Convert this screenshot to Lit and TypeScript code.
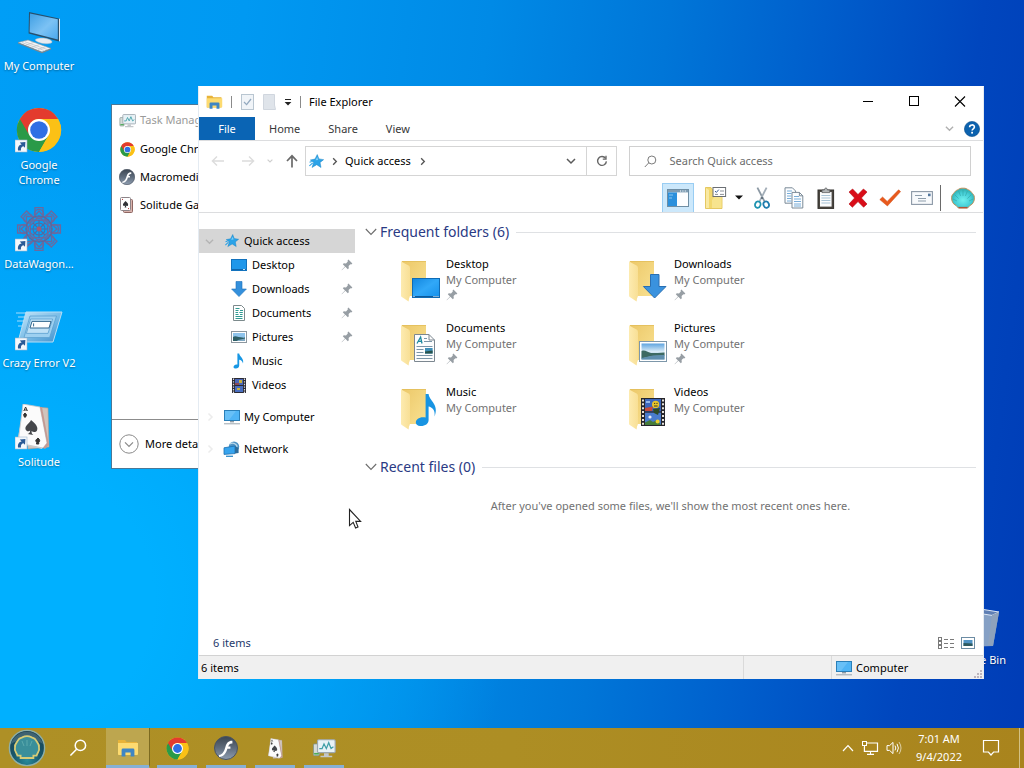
import { LitElement, html, css, svg, nothing, TemplateResult } from "lit";
import { customElement } from "lit/decorators.js";

/* ---------- artwork ---------- */

const art = (w: number, h: number, body: unknown, vb = `0 0 ${w} ${h}`) =>
  html`<svg class="art" width=${w} height=${h} viewBox=${vb} fill="none" aria-hidden="true">${body}</svg>`;

const shortcut = svg`
  <rect x="0" y="33" width="12" height="12" fill="#f4f8fc" stroke="#9fb6cc" stroke-width=".6"/>
  <path d="M3 43.4 C2.6 39.6 4.2 38 6.6 37.6 L4.8 35.6 L10.4 35 L10 40.8 L8.4 39.2 C6.4 39.8 5.6 41 6 43.4Z" fill="#2a5a96"/>`;

const chromeBody = svg`
  <circle cx="24" cy="24" r="22" fill="#fbc116"/>
  <path d="M24 24 L4.9 13 A22 22 0 0 0 24 46 L33.5 29.5Z" fill="#2a9a48"/>
  <path d="M4.9 13 A22 22 0 0 1 43.1 13 H24 A11 11 0 0 0 14.5 29.5Z" fill="#e33b2e"/>
  <path d="M43.1 13 A22 22 0 0 1 24 46 L33.5 29.5 A11 11 0 0 0 24 13Z" fill="#fbc116"/>
  <circle cx="24" cy="24" r="11" fill="#fff"/><circle cx="24" cy="24" r="8.8" fill="#2f6fe4"/>`;
const chrome = (s: number) => art(s, s, chromeBody, "1 1 46 46");

const flash = (s: number) => art(s, s, svg`
  <defs><linearGradient id="fl" x1="0" y1="0" x2="0" y2="1">
    <stop stop-color="#3c4652"/><stop offset=".5" stop-color="#5f6c7c"/><stop offset="1" stop-color="#8e9db0"/></linearGradient></defs>
  <circle cx="12" cy="12" r="11.5" fill="url(#fl)" stroke="#4a5462"/>
  <path d="M5 19 C9 18.4 10.4 14.6 11.4 11 C12.6 6.8 14.6 4.6 18.4 4.8 V7.4 C16 7.2 15 8.2 14.2 10.6 H16.4 V12.8 H13.4 C12 17.4 9.8 20.8 5 21Z" fill="#fff"/>`, "0 0 24 24");

const cards = svg`
  <path d="M9 3 L32 5 L33 44 L12 46Z" fill="#cfc4bd" stroke="#a89c94" stroke-width=".6"/>
  <path d="M8 1 L27 8 L26 46 L1 40Z" fill="#d9d2cf"/>
  <path d="M7 1 L24 4 L31 40 L27 45 L2 40Z" fill="#fbfbfb" stroke="#c2c4c8" stroke-width=".8"/>
  <path d="M27 45 L31 40 L24 4 L26 4 L33 42 L29 46Z" fill="#c59a92"/>
  <path d="M15 17 C19 20 22.6 24 21 27.4 C19.8 29.6 17 29.4 15.6 28 C15.4 30 16 31 17.4 32 L11.6 31 C13.4 30.6 14 29.4 14.2 27.6 C12.4 29 9.6 28 9.4 25.4 C9.4 22 13.6 20.6 15 17Z" fill="#44464a"/>
  <path d="M9.6 4 L7.8 8 M9.6 4 L11.4 8 M8.4 7 H11" stroke="#333" stroke-width="1"/>
  <path d="M9 10 C11 11.4 11 13 9.6 13 L10 14 H8 L8.4 13 C7 12.6 7.4 11.4 9 10Z M22 35 C24.4 37 24 39 22.6 39 L22.8 41 H20.4 L21 39 C19 38.6 19.4 37 22 35Z" fill="#333" stroke="#333"/>`;

const cardsMini = art(16, 16, svg`
  <rect x="4.5" y="2.5" width="9" height="13" rx="1" fill="#d9b3ad" stroke="#8e6662"/>
  <rect x="1.5" y=".5" width="10" height="13" rx="1" fill="#fff" stroke="#8d8488"/>
  <path d="M6.5 4 C8.4 5.8 9.6 7 9 8.4 C8.4 9.4 7.2 9 6.8 8.6 L7.4 10.4 H5.6 L6.2 8.6 C5.6 9.2 4.4 9.2 4 8.2 C3.6 7 5 5.8 6.5 4Z" fill="#2f3136"/>
  <path d="M3 2.4h1M9 11.6h1" stroke="#b3393c"/>`);

const taskIcon = (w: number, h: number) => art(w, h, svg`
  <rect x="1" y="5" width="5" height="10" rx="1" fill="#d5dbd8" stroke="#7b908a" stroke-width=".7"/>
  <rect x="4.5" y="1.5" width="15" height="11" rx="1" fill="#e8f2f6" stroke="#9da7af"/>
  <path d="M6 9 L8.4 9 L10 5 L12 9 L14 4 L16 9 L18 7.5" stroke="#3f9ea6" stroke-width="1"/>
  <path d="M10 13 H14 V15 H17 V16.4 H7 V15 H10Z" fill="#c3c7cb"/><path d="M1.6 13.4 h4" stroke="#4caa56" stroke-width="1.4"/>`, "0 0 20 17");

const computerDesk = art(48, 48, svg`
  <defs><linearGradient id="dk" x1="0" y1="0" x2="1" y2="1"><stop stop-color="#3f9fe4"/><stop offset=".55" stop-color="#7cc2f4"/><stop offset="1" stop-color="#4aa8ee"/></linearGradient></defs>
  <g transform="translate(0 1)">
  <path d="M14 3 L44 9.4 L44 32.4 L13.6 24.4Z" fill="#27506e"/>
  <path d="M15 4.4 L42.8 10.2 V30.6 L14.6 23.2Z" fill="url(#dk)"/>
  <path d="M44 9.4 L45 10 L45 32 L44 32.4Z" fill="#dfe7ee"/>
  <path d="M20 31 C24 27 38 30 37 33.4 C33 36 24 35 20 31Z" fill="#e6ebf0" stroke="#a8b2bc" stroke-width=".5"/>
  <path d="M3 33.6 L13 31 L36 39.4 L27 43Z" fill="#f4f5f6" stroke="#8f989f" stroke-width=".6"/>
  <path d="M7 33.6 L29 41.4 M10 32.8 L32 40.4 M11 36 L19 33.4 M17 38.2 L25 35.4 M23 40.4 L31 37.6" stroke="#b9bfc4" stroke-width=".7"/>
  <path d="M3 33.6 L27 43 L36 39.4 V40.4 L27 44.2 L3 34.6Z" fill="#7a868e"/></g>`);

const wagonPetals = [0, 45, 90, 135, 180, 225, 270, 315].map(
  (a) => svg`<g transform="rotate(${a} 24 23)">
    <path d="M20 9 V1.6 H28 V9 M17 13 L24 5 L31 13 M18 17 L24 10 L30 17"/>
    <circle cx="24" cy="8" r="4.6"/></g>`
);
const wagon = art(48, 48, svg`<g stroke="#7d6090" stroke-width="1.3" opacity=".85">${wagonPetals}</g>
  <g stroke="#55699f" stroke-width="1.1"><circle cx="24" cy="23" r="6"/><circle cx="24" cy="23" r="13"/><path d="M18 17 L30 29 M30 17 L18 29 M15 23 H33 M24 14 V32"/></g>
  <circle cx="24" cy="23" r="2.4" fill="#a85a70"/>${shortcut}`);

const crazy = art(48, 48, svg`
  <defs><linearGradient id="cz" x1="0" y1="0" x2="1" y2="1"><stop stop-color="#c9e7fa"/><stop offset=".5" stop-color="#7dbfe8"/><stop offset="1" stop-color="#3f8ecb"/></linearGradient></defs>
  <path d="M1 8 H11 M3 12 H10 M2 16 H9 M3 21 H8" stroke="#a6dcfb" stroke-width="1.2"/>
  <path d="M11 7 H47 L38 37 H3Z" fill="url(#cz)" stroke="#b6def6" stroke-width="1"/>
  <path d="M15 11 H41.5 L34.6 32.6 H9Z" fill="#9dd0f0" stroke="#5a9fcf" stroke-width=".8"/>
  <path d="M15.6 14 H37.6 L33 28.4 H11.4Z" fill="#bfe1f6" stroke="#5a9fcf" stroke-width=".8"/>
  <path d="M17 16.4 H36 L34 23 H15Z" fill="#fdfeff" stroke="#34688f"/>
  <path d="M18.6 18.4 v3" stroke="#34688f"/>${shortcut}`);

const recycle = art(48, 48, svg`
  <path d="M5 9 L46 10 L40 44 L12 45Z" fill="#93abc6" opacity=".9"/>
  <path d="M5 9 L15 5 L46 10 L39 13.4 L30 12Z" fill="#5f7fb4" stroke="#dfe9f6"/>
  <path d="M39 13 L46 10 L40 44 L35 43Z" fill="#8ea2bc"/>`);

const shell = art(24, 22, svg`
  <defs><radialGradient id="sh" cx=".5" cy=".6" r=".6"><stop stop-color="#6ff0ee"/><stop offset=".6" stop-color="#45ced6"/><stop offset="1" stop-color="#2fa8a6"/></radialGradient></defs>
  <path d="M7.4 21 H16.6 L19 18.4 C22 17.6 23.6 13.6 23.4 10.8 C23.6 8 21.4 6.6 20.6 5.4 C19.4 3.4 17.6 3 16.6 2.4 C14.6 1 13 1.2 12 1.2 C11 1.2 9.4 1 7.4 2.4 C6.4 3 4.6 3.4 3.4 5.4 C2.6 6.6 .4 8 .6 10.8 C.4 13.6 2 17.6 5 18.4Z" fill="url(#sh)" stroke="#c0925e" stroke-width="1"/>
  <path d="M12 9 V3 M9.6 9 L7.6 4 M7.6 11.6 L3.6 7.6 M6 14 L2 12 M14.4 9 L16.4 4 M16.4 11.6 L20.4 7.6 M18 14 L22 12" stroke="#2fa4a4" stroke-width=".6"/>
  <path d="M7.6 20.6 H16.4" stroke="#b0543a" stroke-width="1.4"/>`);

const startOrb = art(40, 40, svg`
  <defs><radialGradient id="orb" cx=".5" cy=".85" r=".8"><stop stop-color="#2a8a9a"/><stop offset=".5" stop-color="#17566a"/><stop offset="1" stop-color="#1b4354"/></radialGradient></defs>
  <circle cx="20" cy="20" r="17.6" fill="url(#orb)" stroke="#8fb0a8" stroke-width="1.4"/>
  <path d="M4 16 A16.6 16.6 0 0 1 36 16 C28 10 12 10 4 16Z" fill="#fff" opacity=".16"/>
  <path d="M13.6 30 V27.6 H10.4 C9.4 24 7 23 8 19.4 C7.4 16 10 14.4 11 12.4 C12.6 9.6 14.4 10.4 16 9 C18 7.8 22 7.8 24 9 C25.6 10.4 27.4 9.6 29 12.4 C30 14.4 32.6 16 32 19.4 C33 23 30.6 24 29.6 27.6 H26.4 V30Z" fill="#3a8f9a" stroke="#d8cc76" stroke-width="1.8"/>
  <path d="M20 18 V12 M17 18 L15 13 M23 18 L25 13" stroke="#6ab4b4" stroke-width=".7"/>`);

const star = (s: number) => art(s, s, svg`
  <path d="M8.8 .6 L10.6 5.2 L15.6 6 L11.8 9 L12.8 14.4 L8.2 11.4 L3.2 14.4 L5 9 L1.4 6.4 L6.4 5.4Z" fill="#2ba3e8" stroke="#1480c4" stroke-width=".5"/>
  <path d="M.4 12.6 L4 9.4 M.6 8.8 L3 8" stroke="#2ba3e8" stroke-width="1.2"/><path d="M8.8 3 L9.8 6.4 L7 6.6Z" fill="#7fd0f8"/>`, "0 0 16 16");

const explorerIcon = (w: number, h: number) => art(w, h, svg`
  <path d="M1 1 H8 L9.6 3 H20 V16 H1Z" fill="#e8b339"/>
  <path d="M1 4 H21 V15 Q21 16 20 16 H2 Q1 16 1 15Z" fill="#fddb70"/>
  <path d="M4.6 17.6 V11 Q4.6 9.6 6 9.6 H16 Q17.4 9.6 17.4 11 V17.6 H13.6 V13.4 H8.4 V17.6Z" fill="#3f86c4"/>`, "0 0 22 18");

/* 16px glyphs used in the tree */
const tree: Record<string, TemplateResult> = {
  Desktop: art(16, 16, svg`<rect x=".5" y="2.5" width="15" height="11" fill="#1f97ea" stroke="#1272bd"/><path d="M1 12.5 h14" stroke="#0f66ad"/><path d="M12 12.5h2" stroke="#bfe2fb"/>`),
  Downloads: art(16, 16, svg`<path d="M5 .5 H11 V8 H15.4 L8 15.6 L.6 8 H5Z" fill="#3490dc" stroke="#1d71ba" stroke-width=".6"/>`),
  Documents: art(16, 16, svg`<path d="M2.5 .5 H10.5 L13.5 3.5 V15.5 H2.5Z" fill="#fff" stroke="#7c8a8c"/><path d="M4.5 3.5h4M4.5 5.5h3M9 5.5h3M4.5 7.5h2.6M8.4 7.5h3.4M4.5 9.5h3M9 9.5h2.6M4.5 11.5h7M4.5 13.5h7" stroke="#2f9a92"/>`),
  Pictures: art(16, 16, svg`<rect x=".5" y="2.5" width="15" height="11" fill="#fff" stroke="#8c979f"/><rect x="2" y="4" width="12" height="8" fill="#8fc4ec"/><path d="M2 8 C5 6 7 9 14 8.6 V12 H2Z" fill="#2e5f66"/><path d="M7 11 L14 9.6 V12 H6Z" fill="#7fa9c4"/>`),
  Music: art(16, 16, svg`<path d="M6.4 .4 H8.2 C8.6 4 13.4 5 12 10.4 C11.4 7.8 9.8 7 8.2 6.8 V12.6 C8.2 14.6 6.4 15.8 4.4 15.6 C2.4 15.4 2 13.6 3.2 12.4 C4 11.6 5.4 11.2 6.4 11.6Z" fill="#1797e4"/>`),
  Videos: art(16, 16, svg`<rect x="1" y="1" width="14" height="15" fill="#2b2b33"/><path d="M2.5 1.6 V16 M13.5 1.6 V16" stroke="#dedee4" stroke-width="1.2" stroke-dasharray="1.4 1.2"/><rect x="4" y="2" width="8" height="6" fill="#4a67b8"/><rect x="4" y="9" width="8" height="6" fill="#4a6fc0"/><path d="M8 3h3v3H8zM6 11h3v2H6z" fill="#c8b13a"/><path d="M4 6h4v2H4z" fill="#8a4a58"/>`),
};

const pcIcon = art(18, 16, svg`
  <rect x="1.5" y="1.5" width="15" height="10" fill="#4fb4f5" stroke="#2a7fb8"/><path d="M2 2 H13 L6 11 H2Z" fill="#8fd2fa" opacity=".4"/>
  <path d="M7 12 H11 V13.4 H7Z" fill="#8f9ba4"/><path d="M1 14.8 H17" stroke="#9aa6ae" stroke-width="1"/>`);

const netIcon = art(18, 16, svg`
  <circle cx="11" cy="5.6" r="5.2" fill="#4e92c4"/><path d="M7 3 C10 1 13 3 14 5 C14 8 11 6 10 9" stroke="#bcd9ea" stroke-width="1.3"/>
  <path d="M1 6.8 L12 5 V12.6 L1 13.4Z" fill="#37a4ee" stroke="#1c6fae" stroke-width=".8"/><path d="M12 5 L15.6 7 V12 L12 12.6Z" fill="#2c6c9c"/><path d="M3 15.3 H10" stroke="#3c92cc" stroke-width="1.4"/>`);

const pin = art(12, 12, svg`<path d="M7.4 .6 L11.4 4.6 L10.2 5.4 L9.4 5.2 L7.6 7 L7.8 9.2 L6.8 10.2 L4.4 7.8 L.8 11.2 L.6 11 L4 7.4 L1.8 5.2 L2.8 4.2 L5 4.4 L6.8 2.6 L6.6 1.6Z" fill="#979ea4"/>`);

/* 48px folders with an overlay */
const overlays: Record<string, unknown> = {
  Desktop: svg`<defs><linearGradient id="od" x1="0" y1="0" x2="1" y2="1"><stop stop-color="#1286de"/><stop offset=".5" stop-color="#31a8f8"/><stop offset="1" stop-color="#1590ea"/></linearGradient></defs>
    <rect x="14.5" y="22.5" width="27" height="19" fill="url(#od)" stroke="#0f6bb4"/><path d="M15 40.5h26" stroke="#0c5a9c"/><path d="M15.5 40.5h1M35.5 40.5h1M37.5 40.5h1M39.5 40.5h1" stroke="#fff"/>`,
  Downloads: svg`<path d="M24.5 18.5 H33 V30.5 H40 L28.6 42 L17.4 30.5 H24.5Z" fill="#3a92de" stroke="#2a6fb2"/>`,
  Documents: svg`<path d="M16.5 14.5 H31 L36.5 20 V41.5 H16.5Z" fill="#fdfdfd" stroke="#7c8790"/><path d="M31 14.5 V20 H36.5" stroke="#7c8790"/>
    <path d="M19 23.5 L22.6 17 L24 23.5 M20.4 21.4 H24" stroke="#1f8aa0" stroke-width="1.3"/><path d="M26 18.5h3M26 21.5h8M18.5 26.5h16M18.5 29.5h7M18.5 32.5h7M18.5 35.5h16M18.5 38.5h16" stroke="#7a95a8"/>
    <rect x="27" y="28" width="7.6" height="5.6" fill="#3f8fb8"/><path d="M27 31.6 L34.6 30.6 V33.6 H27Z" fill="#27544e"/>`,
  Pictures: svg`<defs><linearGradient id="op" x1="0" y1="0" x2="0" y2="1"><stop stop-color="#5ea4e0"/><stop offset=".5" stop-color="#d8ebf6"/><stop offset="1" stop-color="#8db8d6"/></linearGradient></defs>
    <rect x="13.5" y="21.5" width="27" height="20" fill="#fff" stroke="#7d97aa"/><rect x="15.5" y="23.5" width="23" height="16" fill="url(#op)"/>
    <path d="M15.5 31 C19 29.4 21 32 25 33 C30 33 34 33 38.5 32.4 V35.4 L26 36 L15.5 38.6Z" fill="#3d6a62"/><path d="M15.5 39.5 V38 L27 35.4 L38.5 35 V39.5Z" fill="#5f8fae"/>`,
  Music: svg`<path d="M27.6 10 H30.6 C31.2 17 41.4 20 36.6 32.6 C37.4 25.6 34 23.4 30.6 22.6 V36 C30.6 40 26.6 42.4 22 42 C17.4 41.4 16.6 37.6 19.6 35 C22 33 25 32.8 27.6 33.6Z" fill="#1894e2"/>`,
  Videos: svg`<rect x="15" y="14" width="24" height="28" fill="#25252b"/><path d="M17 15.4 V42 M37 15.4 V42" stroke="#e6e3dc" stroke-width="2" stroke-dasharray="2 1.9"/>
    <rect x="19" y="15" width="16" height="12.4" fill="#3c66bc"/><rect x="19" y="28.6" width="16" height="12.4" fill="#4a7ccd"/>
    <circle cx="29.6" cy="20.4" r="3.6" fill="#e8c52a"/><path d="M28 19.4h1.2M30.4 19.4h1.2M28 22h3.6" stroke="#3a3420"/><path d="M19 24 L27 22.6 L26 27 H19Z" fill="#c44a3a"/><path d="M20 17h4v2h-4z" fill="#93b6ea"/>
    <path d="M27 25 L34 24 L32 31 L28 29Z" fill="#2e4a26"/><path d="M19 38.6 L24 36 L27 38 L31 36 L35 41 H19Z" fill="#467c3a"/><circle cx="31.6" cy="37.4" r="2" fill="#ecd030"/><circle cx="24" cy="33" r="1.6" fill="#e9edf6"/>`,
};
const folder = (name: string) => art(48, 48, svg`
  <defs><linearGradient id="ff" x1="0" y1="0" x2="1" y2="0"><stop stop-color="#fdebb0"/><stop offset="1" stop-color="#f8df95"/></linearGradient>
  <linearGradient id="fb" x1="0" y1="0" x2="1" y2="1"><stop stop-color="#ecc869"/><stop offset="1" stop-color="#f9e191"/></linearGradient></defs>
  <path d="M4 5 H28 V38 Q28 40 26 40 H6Z" fill="url(#fb)"/>
  <path d="M3 5.4 L10.6 9.6 Q12 10.4 12 12 V39 Q12 41 11 42.4 L10.6 45.4 L3.8 41 Q3 40.4 3 39.4Z" fill="url(#ff)"/>
  <path d="M3.4 5 H28 V5.8 H4.4Z" fill="#e2bd58"/>
  ${overlays[name]}`);

const chev = (dir: "d" | "r", color: string, s = 10) => art(s, s,
  svg`<path d=${dir === "d" ? "M1 3 L5 7 L9 3" : "M3.5 1.5 L7 5 L3.5 8.5"} stroke=${color} stroke-width="1.5"/>`, "0 0 10 10");
const bigChev = art(12, 8, svg`<path d="M.8 1 L6 6.4 L11.2 1" stroke="#6d6d6d" stroke-width="1.1"/>`);

/* ---------- toolbar glyphs ---------- */
const tbPane = art(22, 18, svg`<rect x=".5" y=".5" width="21" height="17" fill="#fdfeff" stroke="#6f8ea4"/><rect x="1" y="1" width="20" height="2.4" fill="#7e9db4"/><rect x="1" y="3.4" width="9" height="13.6" fill="#2b90dc"/><path d="M2 6h4M2 9h3" stroke="#8cc8f2"/><path d="M13 2h1M15.4 2h1M17.8 2h1" stroke="#fff"/>`);
const tbProps = art(22, 24, svg`<path d="M.5 1.5 H6 L7.5 3.5 H17 V22.5 H.5Z" fill="#f2d86e" stroke="#e0bf4c" stroke-width=".8"/><path d="M1 2 L4 4 V22 H1Z" fill="#f9e9a2"/><path d="M10 10 H16.6 V22 H7 V14Z" fill="#f7e48e"/><rect x="8" y="1.5" width="12.6" height="9" fill="#fff" stroke="#6b6f74"/><path d="M10 5 l1.4 1.4 L13.8 3.6" stroke="#3b5f9a" stroke-width="1"/><path d="M15 5h4M10 8.4h3M15 8.4h4" stroke="#8d9298"/>`);
const tbCut = art(16, 22, svg`<path d="M3.4 .6 L10.6 14.6" stroke="#8b98a3" stroke-width="1.8"/><path d="M12.6 .6 L5.4 14.6" stroke="#a3aeb8" stroke-width="1.8"/><ellipse cx="3.8" cy="17.6" rx="2.7" ry="3.2" stroke="#1e93b0" stroke-width="1.8" transform="rotate(20 3.8 17.6)"/><ellipse cx="12.2" cy="17.6" rx="2.7" ry="3.2" stroke="#1e7cae" stroke-width="1.8" transform="rotate(-20 12.2 17.6)"/><circle cx="8" cy="11" r="1" fill="#52606c"/>`);
const tbCopy = art(20, 22, svg`<g stroke="#7b8a97" fill="#fbfdff"><path d="M1 .8 H8.4 L11.6 4 V16.2 H1Z"/><path d="M8 5.4 H15.4 L18.8 8.8 V21 H8Z"/></g><path d="M3 4h5M3 6.5h4.4M3 9h4.4M3 11.5h4.4M3 14h4.4M10 9.5h5M10 12h7M10 14.5h7M10 17h7M10 19h7" stroke="#6aa4d4" stroke-width=".9"/><path d="M15.4 5.4V8.8h3.4" stroke="#7b8a97"/>`);
const tbPaste = art(18, 22, svg`<rect x="1" y="3" width="15.6" height="18.4" fill="#4a4640" stroke="#33302c"/><rect x="3" y="5" width="11.6" height="14.6" fill="#fbfcfd"/><path d="M4.4 8.5h9M4.4 11h9M4.4 13.5h9M4.4 16h9" stroke="#a9c3d6"/><path d="M5 5.6 V3 H7.4 C7.4 .4 10.4 .4 10.4 3 H12.8 V5.6Z" fill="#b3b6b8" stroke="#5c5e60" stroke-width=".8"/>`);
const tbDel = art(20, 20, svg`<path d="M1 4 L4.6 1 L10 6.6 L15.4 1 L19 4 L13.4 10 L19 16 L15.6 19.2 L10 13.6 L4.4 19.2 L1 16 L6.6 10Z" fill="#d90d18" stroke="#b30a12" stroke-width=".6"/>`);
const tbCheck = art(22, 18, svg`<path d="M.8 10.6 L3.6 8 L8.2 12.4 L19.6 .8 L21.6 2.6 L8.4 17Z" fill="#e8591c" stroke="#cf4c14" stroke-width=".5"/>`);
const tbMail = art(22, 14, svg`<rect x=".6" y=".6" width="20.8" height="12.8" fill="#f8fafc" stroke="#8b98a6" stroke-width="1.1"/><path d="M4 4.5h7M7 7.5h8M7 10h8" stroke="#8e9dab"/><rect x="17" y="2.6" width="2.6" height="2.6" fill="#55789e"/>`);

interface Item { name: string; pinned: boolean }
const folders: Item[] = [
  { name: "Desktop", pinned: true },
  { name: "Downloads", pinned: true },
  { name: "Documents", pinned: true },
  { name: "Pictures", pinned: true },
  { name: "Music", pinned: false },
  { name: "Videos", pinned: false },
];

const base = css`
  :host { display: block; font-family: "Noto Sans", "Open Sans", sans-serif; font-size: 11px; line-height: 16px; color: #000; }
  * { box-sizing: border-box; }
  button, input { font: inherit; color: inherit; border: 0; background: none; padding: 0; margin: 0; }
  a { color: inherit; text-decoration: none; }
  button, a { display: flex; align-items: center; white-space: nowrap; }
  h2, p, ul { margin: 0; padding: 0; font-weight: 400; list-style: none; }
  .art { display: block; flex: none; }
`;

@customElement("task-window")
class TaskWindow extends LitElement {
  static styles = [base, css`
    :host { background: #fff; border: 1px solid #4b7897; display: flex; flex-direction: column; }
    .head, .row { display: flex; align-items: center; gap: 5px; height: 28px; padding-left: 7px; white-space: nowrap; }
    .head { color: #9a9a9a; height: 30px; }
    .ic { width: 16px; display: flex; justify-content: center; }
    ul { flex: 1; }
    .foot { border-top: 1px solid #8c8c8c; height: 49px; display: flex; align-items: center; padding-left: 7px; }
    .foot button { gap: 6px; }
  `];
  render() {
    const row = (icon: unknown, text: string) => html`<li class="row"><span class="ic">${icon}</span>${text}</li>`;
    return html`
      <div class="head"><span class="ic">${taskIcon(17, 15)}</span>Task Manager</div>
      <ul>
        ${row(chrome(15), "Google Chrome")}
        ${row(flash(16), "Macromedia Flash")}
        ${row(cardsMini, "Solitude Game")}
      </ul>
      <div class="foot"><button>${art(20, 20, svg`<circle cx="10" cy="10" r="9.2" stroke="#8a8a8a"/><path d="M6 8.4 L10 12.4 L14 8.4" stroke="#8a8a8a" stroke-width="1.2"/>`)}More details</button></div>`;
  }
}

@customElement("explorer-window")
class ExplorerWindow extends LitElement {
  static styles = [base, css`
    :host { background: #fff; border: 1px solid #e4ebf2; border-top-color: #fff; border-bottom: 0; display: flex; flex-direction: column; }
    .title { display: flex; align-items: stretch; height: 30px; padding-left: 7px; }
    .quick { display: flex; align-items: center; flex: 1; gap: 8px; }
    .quick .sep { width: 1px; height: 12px; background: #8a8a8a; }
    .caption { width: 46px; justify-content: center; }
    .tabs { display: flex; height: 24px; border-bottom: 1px solid #dcdddf; align-items: stretch; color: #383838; }
    .tab { padding: 0 14px; }
    .tab.file { background: #0a64b4; color: #fff; width: 56px; padding: 0; justify-content: center; }
    .right { margin-left: auto; display: flex; align-items: center; gap: 10px; padding-right: 3px; }
    .nav { display: flex; align-items: center; height: 40px; padding: 0 12px; }
    .arrows { display: flex; align-items: center; gap: 12px; width: 94px; }
    .address { flex: 310; height: 30px; border: 1px solid #d5d5d5; display: flex; align-items: stretch; margin-right: 12px; min-width: 0; }
    .crumbs { display: flex; align-items: center; gap: 6px; flex: 1; padding-left: 3px; }
    .crumbs .name { padding: 0 1px 0 0; }
    .drop { width: 30px; justify-content: center; }
    .refresh { width: 30px; justify-content: center; border-left: 1px solid #d5d5d5; }
    .search { flex: 325; height: 30px; border: 1px solid #d0d0d0; display: flex; align-items: center; gap: 12px; padding-left: 14px; }
    .search input { flex: 1; min-width: 0; outline: 0; }
    .search input::placeholder { color: #6c6c6c; opacity: 1; }
    .tools { height: 32px; display: flex; justify-content: flex-end; align-items: stretch; padding: 2px 7px 0 0; border-bottom: 1px solid #dcdddf; }
    .tools button { width: 32px; justify-content: center; }
    .tools .on { background: #cce8fb; border: 1px solid #99cdf3; border-bottom: 0; }
    .tools .props { margin-left: 6px; }
    .tools .more { width: 14px; }
    .tools .bar { width: 1px; background: #6a6a6a; margin: 2px 9px 1px 2px; }
    .tools .shell { width: 26px; }
    .body { flex: 1; display: flex; min-height: 0; }
    .side { width: 156px; padding-top: 16px; flex: none; }
    .side a { height: 24px; padding-right: 2px; }
    .side .root { padding-left: 6px; gap: 3px; }
    .side .root .exp { width: 15px; display: flex; }
    .side .root .pic { width: 18px; display: flex; justify-content: center; }
    .side .root.sel { background: #d6d6d6; }
    .side .kid { padding-left: 32px; gap: 5px; }
    .side .kid .lbl { flex: 1; }
    .side .gap { margin-top: 8px; }
    .main { flex: 1; padding: 11px 7px 0 10px; display: flex; flex-direction: column; min-width: 0; }
    .group { display: flex; align-items: center; height: 16px; color: #2a3a84; white-space: nowrap; gap: 3px; }
    .group::after { content: ""; flex: 1; height: 1px; background: #dfe1e4; margin-left: 4px; }
    .group h2 { font-size: 14px; }
    .tiles { display: grid; grid-template-columns: repeat(auto-fill, 228px); grid-auto-rows: 64px; padding: 16px 0 0 33px; max-width: 560px; height: 219px; }
    .tile { align-items: flex-start; text-align: left; }
    .info { display: flex; flex-direction: column; align-items: flex-start; }
    .info .art { margin-top: 1px; }
    .sub, .empty { color: #727272; }
    .empty { text-align: center; padding-top: 23px; }
    .count { display: flex; align-items: center; justify-content: space-between; height: 24px; padding: 0 8px 0 14px; color: #25396b; }
    .views { display: flex; gap: 6px; }
    .status { display: grid; grid-template-columns: 1fr 88px 151px; height: 24px; background: #f0f0f0; border-top: 1px solid #d2d2d2; }
    .cell { display: flex; align-items: center; gap: 3px; padding-left: 2px; border-right: 1px solid #dadada; }
    .cell.last { border: 0; padding-left: 3px; }
    .grip { margin: auto 1px 1px auto; }
  `];

  private group(text: string) {
    return html`<div class="group">${bigChev}<h2>${text}</h2></div>`;
  }

  render() {
    return html`
      <div class="title">
        <div class="quick">
          ${explorerIcon(17, 14)}<span class="sep"></span>
          <button aria-label="Properties">${art(14, 16, svg`<rect x="1.5" y=".5" width="12" height="15" fill="#f0f4f8" stroke="#b9c6d1"/><path d="M4 8 L6.6 10.6 L11 5" stroke="#93a9bf" stroke-width="1.3"/>`)}</button>
          <button aria-label="New folder">${art(14, 16, svg`<path d="M1.5 .5 H12.5 V11 L13.5 15.5 H1.5Z" fill="#dfe4ea" stroke="#d0d6de"/>`)}</button>
          <button aria-label="Customize">${art(8, 8, svg`<path d="M1 1.5h6" stroke="#222"/><path d="M.6 4H7.4L4 7.6Z" fill="#222"/>`)}</button>
          <span class="sep"></span>
          <span>File Explorer</span>
        </div>
        <button class="caption" aria-label="Minimize">${art(12, 12, svg`<path d="M1 5.5h10" stroke="#000"/>`)}</button>
        <button class="caption" aria-label="Maximize">${art(12, 12, svg`<rect x="1.5" y=".5" width="9" height="9" stroke="#000"/>`)}</button>
        <button class="caption" aria-label="Close">${art(12, 12, svg`<path d="M1 .5l10 10M11 .5L1 10.5" stroke="#000" stroke-width="1.1"/>`)}</button>
      </div>
      <div class="tabs">
        <button class="tab file">File</button><button class="tab">Home</button><button class="tab">Share</button><button class="tab">View</button>
        <div class="right">
          <button aria-label="Expand the ribbon">${chev("d", "#b0b0b0", 9)}</button>
          <button aria-label="Help">${art(16, 16, svg`<circle cx="8" cy="8" r="7.6" fill="#0c62ae" stroke="#0a4d8c" stroke-width=".6"/><path d="M5.6 6.2 C5.6 3.2 10.4 3.2 10.4 6 C10.4 7.8 8.1 7.8 8.1 9.6" stroke="#fff" stroke-width="1.6"/><rect x="7.2" y="10.8" width="1.8" height="1.8" fill="#fff"/>`)}</button>
        </div>
      </div>
      <div class="nav">
        <div class="arrows">
          <button aria-label="Back">${art(14, 12, svg`<path d="M13 6H1.6M6 1.4L1.4 6L6 10.6" stroke="#dcdcdc" stroke-width="1.4"/>`)}</button>
          <button aria-label="Forward">${art(18, 12, svg`<path d="M5 6H16.4M12 1.4L16.6 6L12 10.6" stroke="#dcdcdc" stroke-width="1.4"/>`)}</button>
          <button aria-label="Recent locations">${art(6, 6, svg`<path d="M.6 1.6L3 4L5.4 1.6" stroke="#cfcfcf" stroke-width="1.2"/>`)}</button>
          <button aria-label="Up">${art(14, 14, svg`<path d="M7 13.4V2M2 7L7 1.8L12 7" stroke="#6a6a6a" stroke-width="1.7"/>`)}</button>
        </div>
        <div class="address">
          <div class="crumbs">${star(15)}${chev("r", "#555", 9)}<a class="name" href="#">Quick access</a>${chev("r", "#555", 9)}</div>
          <button class="drop" aria-label="Previous locations">${chev("d", "#5a5a5a", 10)}</button>
          <button class="refresh" aria-label="Refresh">${art(12, 12, svg`<path d="M9.6 3.4 A4.4 4.4 0 1 0 10.4 6.4" stroke="#666" stroke-width="1.4"/><path d="M10 .8V4.2H6.8" stroke="#666" stroke-width="1.3"/>`)}</button>
        </div>
        <label class="search">${art(13, 13, svg`<circle cx="7.8" cy="5" r="4" stroke="#7a7a7a"/><path d="M4.8 7.8L.8 12" stroke="#7a7a7a"/>`)}
          <input type="text" aria-label="Search Quick access" placeholder="Search Quick access" /></label>
      </div>
      <div class="tools">
        <button class="on" aria-label="Navigation pane">${tbPane}</button>
        <button class="props" aria-label="Layout">${tbProps}</button>
        <button class="more" aria-label="More layouts">${art(8, 5, svg`<path d="M0 .5H8L4 4.5Z" fill="#111"/>`)}</button>
        <button aria-label="Cut">${tbCut}</button>
        <button aria-label="Copy">${tbCopy}</button>
        <button aria-label="Paste">${tbPaste}</button>
        <button aria-label="Delete">${tbDel}</button>
        <button aria-label="Rename">${tbCheck}</button>
        <button aria-label="E-mail">${tbMail}</button>
        <span class="bar"></span>
        <button class="shell" aria-label="Classic settings">${shell}</button>
      </div>
      <div class="body">
        <nav class="side">
          <a class="root sel" href="#"><span class="exp">${chev("d", "#b4b4b4", 9)}</span><span class="pic">${star(14)}</span><span>Quick access</span></a>
          ${folders.map((f) => html`<a class="kid" href="#">${tree[f.name]}<span class="lbl">${f.name}</span>${f.pinned ? pin : nothing}</a>`)}
          <a class="root gap" href="#"><span class="exp">${chev("r", "#ececec", 10)}</span><span class="pic">${pcIcon}</span><span>My Computer</span></a>
          <a class="root gap" href="#"><span class="exp">${chev("r", "#ececec", 10)}</span><span class="pic">${netIcon}</span><span>Network</span></a>
        </nav>
        <section class="main">
          ${this.group("Frequent folders (6)")}
          <div class="tiles">
            ${folders.map((f) => html`<button class="tile">${folder(f.name)}
              <span class="info"><span>${f.name}</span><span class="sub">My Computer</span>${f.pinned ? pin : nothing}</span></button>`)}
          </div>
          ${this.group("Recent files (0)")}
          <p class="empty">After you've opened some files, we'll show the most recent ones here.</p>
        </section>
      </div>
      <div class="count"><span>6 items</span>
        <div class="views">
          <button aria-label="Details view">${art(17, 13, svg`<g stroke="#7a7a7a"><rect x=".5" y=".5" width="3" height="3"/><rect x=".5" y="4.5" width="3" height="3"/><rect x=".5" y="8.5" width="3" height="3"/><path d="M6 2.5h4M12 2.5h4M6 6.5h4M12 6.5h4M6 10.5h4M12 10.5h4"/></g>`)}</button>
          <button aria-label="Large icons view">${art(14, 12, svg`<rect x=".5" y=".5" width="13" height="11" fill="#fff" stroke="#6c8ca4"/><rect x="2.5" y="3" width="9" height="6" fill="#4f92c4"/><path d="M2.5 6l9 .6V9h-9z" fill="#2e5a60"/>`)}</button>
        </div>
      </div>
      <div class="status">
        <span class="cell">6 items</span><span class="cell"></span>
        <span class="cell last">${pcIcon}<span>Computer</span><span class="grip">${art(8, 8, svg`<path d="M6 0h2v2H6zM3 3h2v2H3zM6 3h2v2H6zM0 6h2v2H0zM3 6h2v2H3zM6 6h2v2H6z" fill="#bdb5bd"/>`)}</span></span>
      </div>`;
  }
}

@customElement("app-root")
class AppRoot extends LitElement {
  static styles = [base, css`
    :host {
      display: flex; flex-direction: column; height: 100vh; overflow: hidden;
      background:
        radial-gradient(ellipse 50% 60% at 0% 78%, #00b0ff 30%, #00b0ff00 100%),
        linear-gradient(97deg, #009ef6 0%, #0099f2 22%, #008ae6 44%, #0076d8 60%, #005ecc 74%, #0046be 88%, #003cb6 100%);
    }
    .desk { flex: 1; position: relative; min-height: 0; }
    .icons { width: 78px; display: flex; flex-direction: column; }
    .icon { height: 99px; width: 78px; padding-top: 8px; flex-direction: column; align-items: center; color: #fff; line-height: 15px; gap: 2px; text-align: center; text-shadow: 0 1px 2px #0006; }
    .icon span { max-width: 76px; white-space: normal; }
    .bin { position: absolute; right: 8px; bottom: 35px; }
    .task { position: absolute; left: 111px; top: 104px; width: 360px; height: 365px; }
    .explorer { position: absolute; left: 198px; right: 40px; top: 86px; bottom: 49px; }
    .cursor { position: absolute; left: 348px; top: 508px; }
    .bar { height: 40px; display: flex; align-items: stretch; background: linear-gradient(90deg, #ae9026, #ad8e24 50%, #a9841d); color: #fff; }
    .start { width: 54px; justify-content: center; }
    .find { width: 52px; justify-content: center; padding-right: 5px; }
    .apps { display: flex; gap: 5px; flex: 1; }
    .app { width: 44px; justify-content: center; border-bottom: 3px solid transparent; position: relative; padding-top: 3px; }
    .app::after { content: ""; position: absolute; left: 2px; right: 2px; bottom: -3px; height: 3px; background: #86b0d6; }
    .app.on { background: #bda64f; border-right: 1px solid #7c6a20; }
    .app.on::after { left: 0; right: 0; }
    .tray { display: flex; align-items: center; gap: 7px; }
    .clock { width: 60px; text-align: center; line-height: 18px; flex-direction: column; justify-content: center; }
    .notes { width: 30px; justify-content: center; }
    .peek { width: 5px; height: 40px; border-left: 1px solid #d3c184; margin-left: 6px; }
  `];
  render() {
    const icon = (art: unknown, text: string, extra = "") => html`<button class="icon ${extra}">${art}<span>${text}</span></button>`;
    return html`
      <div class="desk">
        <div class="icons">
          ${icon(computerDesk, "My Computer")}
          ${icon(art(48, 48, svg`<g transform="translate(0 -1)">${chromeBody}</g>${shortcut}`), "Google Chrome")}
          ${icon(wagon, "DataWagon...")}
          ${icon(crazy, "Crazy Error V2")}
          ${icon(art(48, 48, svg`<g transform="translate(1 -1)">${cards}</g>${shortcut}`), "Solitude")}
        </div>
        ${icon(recycle, "Recycle Bin", "bin")}
        <task-window class="task"></task-window>
        <explorer-window class="explorer"></explorer-window>
        <div class="cursor">${art(16, 22, svg`<path d="M1.5 1.5V17.6L5.2 14.4L7.6 20L10 19L7.8 13.4H12.6Z" fill="#fff" stroke="#222" stroke-width="1.1"/>`)}</div>
      </div>
      <div class="bar">
        <button class="start" aria-label="Start">${startOrb}</button>
        <button class="find" aria-label="Search">${art(18, 18, svg`<circle cx="11.4" cy="6.4" r="5.2" stroke="#fff" stroke-width="1.5"/><path d="M7.6 10.2L1.4 16.6" stroke="#fff" stroke-width="1.5"/>`)}</button>
        <div class="apps">
          <button class="app on" aria-label="File Explorer">${explorerIcon(22, 18)}</button>
          <button class="app" aria-label="Google Chrome">${chrome(23)}</button>
          <button class="app" aria-label="Flash">${flash(24)}</button>
          <button class="app" aria-label="Solitude">${art(17, 21, cards, "-1 0 37 47")}</button>
          <button class="app" aria-label="Task Manager">${taskIcon(24, 20)}</button>
        </div>
        <div class="tray">
          <button aria-label="Show hidden icons">${art(12, 8, svg`<path d="M1 7L6 1.6L11 7" stroke="#fff" stroke-width="1.2"/>`)}</button>
          <button aria-label="Network">${art(18, 16, svg`<path d="M6 3H16.5V11.4H3.4V7" stroke="#fff" stroke-width="1.2"/><rect x="1.5" y="1.5" width="4" height="4" stroke="#fff"/><path d="M3.5 5.5V8M9.5 11.4V14M6 14.4H13" stroke="#fff" stroke-width="1.1"/>`)}</button>
          <button aria-label="Volume">${art(16, 14, svg`<path d="M1 4.6H3.6L7 1.4V12.6L3.6 9.4H1Z" stroke="#fff"/><path d="M9 4.6Q10.6 7 9 9.4M11 2.8Q13.8 7 11 11.2" stroke="#fff"/><path d="M13 1Q17 7 13 13" stroke="#fff" opacity=".6"/>`)}</button>
          <button class="clock"><span>7:01 AM</span><span>9/4/2022</span></button>
          <button class="notes" aria-label="Notifications">${art(18, 18, svg`<path d="M1.5 1.5H16.5V13H11.6L9 16L6.4 13H1.5Z" stroke="#fff" stroke-width="1.2"/>`)}</button>
          <button class="peek" aria-label="Show desktop"></button>
        </div>
      </div>`;
  }
}
